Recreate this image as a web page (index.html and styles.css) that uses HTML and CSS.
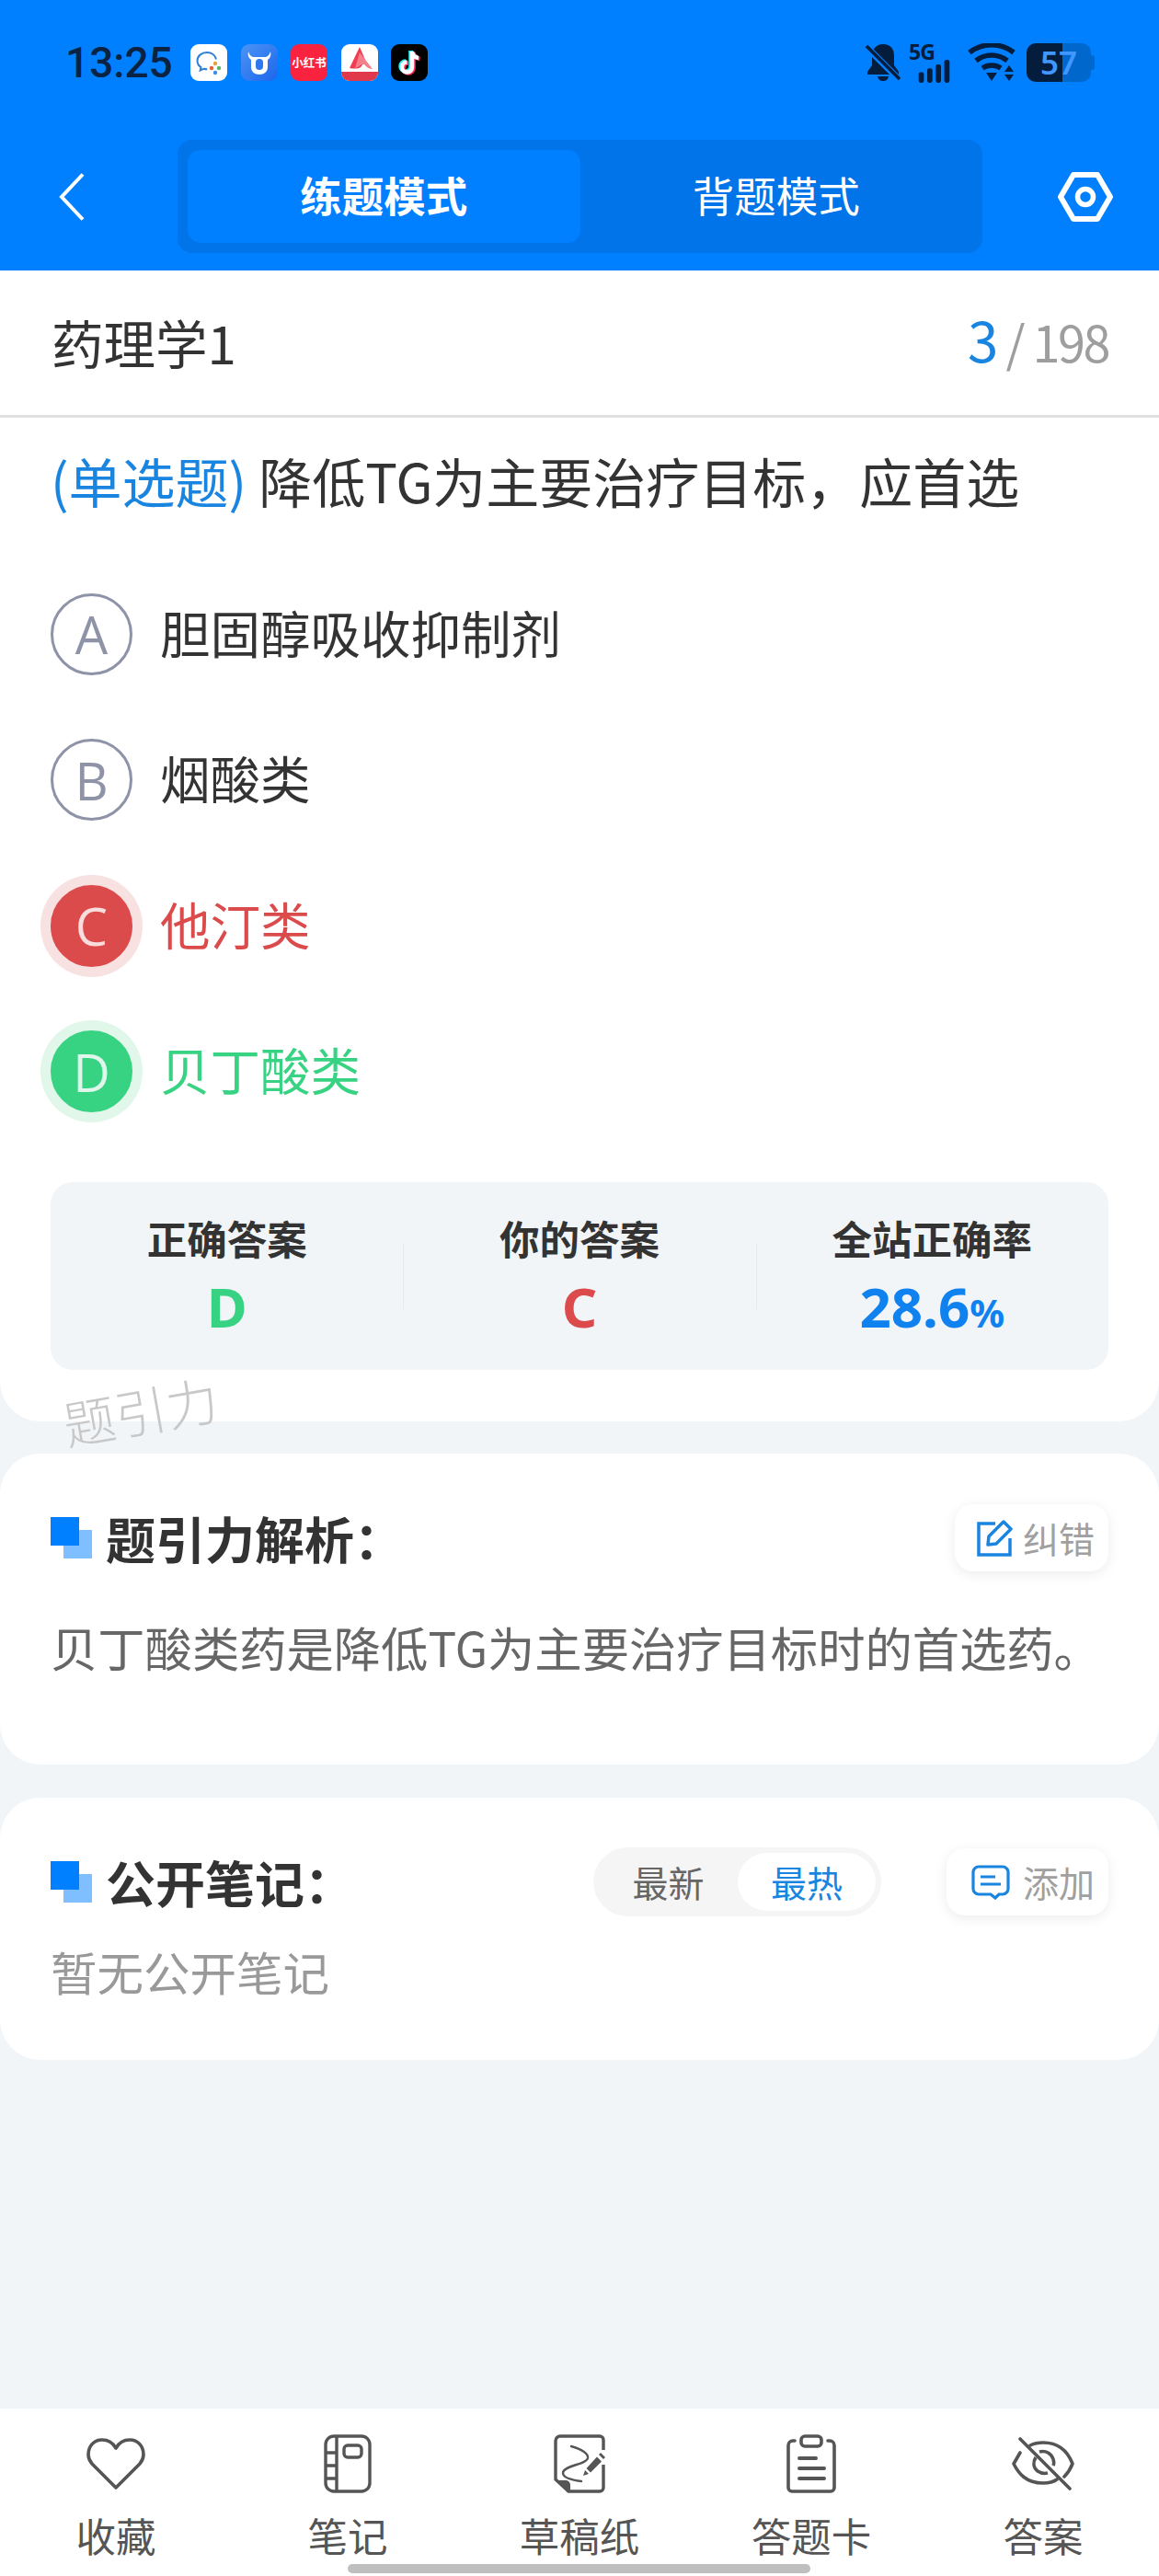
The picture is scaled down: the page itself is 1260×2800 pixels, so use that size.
FILE: index.html
```html
<!DOCTYPE html>
<html lang="zh-CN">
<head>
<meta charset="utf-8">
<title>药理学1</title>
<link rel="stylesheet" href="styles.css">
</head>
<body>
<div class="page">
  <header class="top">
    <div class="status">
      <span class="time">13:25</span>
      <div class="apps">
        <svg class="app" viewBox="0 0 40 40"><rect width="40" height="40" rx="9" fill="#fff"/><path d="M18 9c-6 0-10.500 4-10.500 9 0 3 1.500 5.500 4 7.200l-.8 3.300 4-1.800c1.200.3 2.300.5 3.500.5" fill="none" stroke="#2f7fd6" stroke-width="2"/><path d="M18 9c5 0 9 3 10 7.500" fill="none" stroke="#2f7fd6" stroke-width="2"/><circle cx="27" cy="21" r="2.200" fill="#e8a33a"/><circle cx="23" cy="26" r="2.200" fill="#e8603a"/><circle cx="31" cy="26" r="2.200" fill="#5ab56a"/><circle cx="27" cy="31" r="2.200" fill="#3a8fe8"/></svg>
        <svg class="app" viewBox="0 0 40 40"><defs><linearGradient id="gb" x1="0" y1="0" x2="1" y2="1"><stop offset="0" stop-color="#4b94f5"/><stop offset="1" stop-color="#1d66ec"/></linearGradient></defs><rect width="40" height="40" rx="9" fill="url(#gb)"/><path d="M8 8c1 3 2 5 5 6h14c3-1 4-3 5-6 1 4 0 7-3 9v8c0 5-4 8-9 8s-9-3-9-8v-8c-3-2-4-5-3-9z" fill="#fff"/><rect x="16" y="16" width="8" height="12" rx="4" fill="#2f78ee"/></svg>
        <div class="app app-red">小红书</div>
        <svg class="app" viewBox="0 0 40 40"><rect width="40" height="40" rx="9" fill="#fff"/><path d="M0 30h40v1a9 9 0 0 1-9 9H9a9 9 0 0 1-9-9z" fill="#e0394b"/><path d="M20 3l9 21c-3-3-6-3-7 0-2 3-8 3-13 2z" fill="#ef3e52"/><path d="M20 9l14 18c-5 0-7-3-9-5-3-1-6 3-10 4z" fill="#f5808c"/></svg>
        <svg class="app" viewBox="0 0 40 40"><rect width="40" height="40" rx="9" fill="#000"/><path d="M23 8v17a5.500 5.500 0 1 1-5.500-5.500" fill="none" stroke="#25f4ee" stroke-width="4.500" transform="translate(-1.500 -1)"/><path d="M23 8c.5 4 3 6.500 7 7" fill="none" stroke="#25f4ee" stroke-width="4.500" transform="translate(-1.500 -1)"/><path d="M23 8v17a5.500 5.500 0 1 1-5.500-5.500" fill="none" stroke="#fe2c55" stroke-width="4.500" transform="translate(1.500 1)"/><path d="M23 8c.5 4 3 6.500 7 7" fill="none" stroke="#fe2c55" stroke-width="4.500" transform="translate(1.500 1)"/><path d="M23 8v17a5.500 5.500 0 1 1-5.500-5.500M23 8c.5 4 3 6.500 7 7" fill="none" stroke="#fff" stroke-width="4.500"/></svg>
      </div>
      <div class="sys">
        <svg class="sys-bell" viewBox="0 0 38 42"><path d="M19 1c-8 0-12 6-12 13v10l-5 7v3h34v-3l-5-7V14C31 6 27 1 19 1z" fill="#051d3d"/><path d="M13 36h12c-1 4-3 5-6 5s-5-1-6-5z" fill="#051d3d"/><path d="M1 4l36 36" stroke="#007fff" stroke-width="7"/><path d="M1 3l36 36" stroke="#051d3d" stroke-width="3.500"/></svg>
        <div class="sys-sig">
          <span class="sig-label">5G</span>
          <svg class="sig-bars" viewBox="0 0 47 35"><rect x="0" y="19" width="8" height="16" rx="3" fill="#051d3d"/><rect x="13" y="13" width="8" height="22" rx="3" fill="#051d3d"/><rect x="26" y="7" width="8" height="28" rx="3" fill="#051d3d"/><rect x="39" y="0" width="8" height="35" rx="3" fill="#051d3d"/></svg>
        </div>
        <svg class="sys-wifi" viewBox="0 0 52 42"><path d="M2 10C16-1 36-1 50 10" fill="none" stroke="#051d3d" stroke-width="5.500"/><path d="M9 19c10-8 24-8 34 0" fill="none" stroke="#051d3d" stroke-width="5.500"/><path d="M16 27c6-4 14-4 20 0" fill="none" stroke="#051d3d" stroke-width="5.500"/><path d="M20 32h12l-6 9z" fill="#051d3d"/><path d="M45 24l5 7H40zM40 34h10l-5 7z" fill="#051d3d"/></svg>
        <div class="battery"><div class="batt-fill"></div><span class="batt-num">57</span><i class="batt-nub"></i></div>
      </div>
    </div>
    <nav class="nav">
      <svg class="back" viewBox="0 0 28 52"><path d="M26 1.500L3 26l23 24.500" fill="none" stroke="#fff" stroke-width="4"/></svg>
      <div class="seg">
        <div class="seg-item seg-on">练题模式</div>
        <div class="seg-item">背题模式</div>
      </div>
      <svg class="gear" viewBox="0 0 60 54"><path d="M17 3h26l14 24-14 24H17L3 27z" fill="none" stroke="#fff" stroke-width="6" stroke-linejoin="round"/><circle cx="30" cy="27" r="8.500" fill="none" stroke="#fff" stroke-width="5.500"/></svg>
    </nav>
  </header>

  <main class="main">
    <section class="card card-q">
      <div class="title-row">
        <span class="title">药理学1</span>
        <span class="count"><b class="count-now">3</b><i class="count-slash">/</i><span class="count-all">198</span></span>
      </div>
      <p class="question"><span class="qtype">(单选题)</span> 降低TG为主要治疗目标，应首选</p>
      <ul class="options">
        <li class="option"><span class="ball">A</span><span class="opt-text">胆固醇吸收抑制剂</span></li>
        <li class="option"><span class="ball">B</span><span class="opt-text">烟酸类</span></li>
        <li class="option wrong"><span class="ball">C</span><span class="opt-text">他汀类</span></li>
        <li class="option right"><span class="ball">D</span><span class="opt-text">贝丁酸类</span></li>
      </ul>
      <div class="stats">
        <div class="stat"><span class="stat-label">正确答案</span><span class="stat-val green">D</span></div>
        <div class="stat"><span class="stat-label">你的答案</span><span class="stat-val red">C</span></div>
        <div class="stat"><span class="stat-label">全站正确率</span><span class="stat-val blue">28.6<small>%</small></span></div>
      </div>
      <span class="watermark">题引力</span>
    </section>

    <section class="card card-a">
      <div class="sec-head">
        <i class="mark"></i>
        <h2 class="sec-title">题引力解析：</h2>
        <div class="chip">
          <svg class="chip-icon" viewBox="0 0 40 40"><path d="M20 4H2v34h34V20" fill="none" stroke="#1a85e0" stroke-width="3.500"/><path d="M13 18L29 2l8 8-16 16-9 1z" fill="none" stroke="#1a85e0" stroke-width="3.500" stroke-linejoin="round"/></svg>
          <span>纠错</span>
        </div>
      </div>
      <p class="analysis">贝丁酸类药是降低TG为主要治疗目标时的首选药。</p>
    </section>

    <section class="card card-n">
      <div class="sec-head">
        <i class="mark"></i>
        <h2 class="sec-title">公开笔记：</h2>
        <div class="toggle"><span class="tg-item">最新</span><span class="tg-item tg-on">最热</span></div>
        <div class="chip chip-add">
          <svg class="chip-icon chip-icon-wide" viewBox="0 0 42 38"><path d="M8 2h26a6 6 0 0 1 6 6v18a6 6 0 0 1-6 6h-4l-4 4-5-4H8a6 6 0 0 1-6-6V8a6 6 0 0 1 6-6z" fill="none" stroke="#1a85e0" stroke-width="3.200"/><path d="M10 13h16M10 21h22" stroke="#1a85e0" stroke-width="3.200"/></svg>
          <span>添加</span>
        </div>
      </div>
      <p class="empty">暂无公开笔记</p>
    </section>
  </main>

  <footer class="tabs">
    <div class="tab">
      <span class="tab-ico"><svg width="64" height="56" viewBox="0 0 64 56"><path d="M32 11C28 4 22 2 17 2 8 2 2 9 2 18c0 4 1.500 7 4 10l26 26 26-26c2.500-3 4-6 4-10 0-9-6-16-15-16-5 0-11 2-15 9z" fill="none" stroke="#555" stroke-width="3.600" stroke-linejoin="round"/></svg></span>
      <span class="tab-label">收藏</span>
    </div>
    <div class="tab">
      <span class="tab-ico"><svg width="52" height="64" viewBox="0 0 52 64"><rect x="2" y="2" width="48" height="60" rx="9" fill="none" stroke="#555" stroke-width="3.400"/><path d="M14 2v60M2 20h12M2 34h12M2 48h12" stroke="#555" stroke-width="3.400"/><rect x="22" y="12" width="19" height="13" rx="4" fill="none" stroke="#555" stroke-width="3.400"/></svg></span>
      <span class="tab-label">笔记</span>
    </div>
    <div class="tab">
      <span class="tab-ico"><svg width="56" height="64" viewBox="0 0 56 64"><path d="M54 17V6a4 4 0 0 0-4-4H7a5 5 0 0 0-5 5v42l14 13h34a4 4 0 0 0 4-4V33" fill="none" stroke="#555" stroke-width="3.400"/><path d="M3 50h10a5 5 0 0 1 5 5v7z" fill="#555"/><path d="M19 13c11 3 19 8 18 13-2 7-27 8-27 16 0 6 12 8 20 9" fill="none" stroke="#555" stroke-width="2.400" stroke-linecap="round"/><path d="M32 45l2-6 4 4zM35.500 37L47 24.500l5 5L40 41.500z" fill="#555"/><path d="M49 22l2-2 5 5-2 2z" fill="#555"/></svg></span>
      <span class="tab-label">草稿纸</span>
    </div>
    <div class="tab">
      <span class="tab-ico"><svg width="54" height="64" viewBox="0 0 54 64"><path d="M9 7H7a5 5 0 0 0-5 5v46a4 4 0 0 0 4 4h42a4 4 0 0 0 4-4V12a5 5 0 0 0-5-5h-2" fill="none" stroke="#555" stroke-width="3.600" stroke-linecap="round"/><rect x="16" y="2" width="22" height="11" rx="4" fill="none" stroke="#555" stroke-width="3.600"/><path d="M14 26h18M14 37h27M14 48h27" stroke="#555" stroke-width="4" stroke-linecap="round"/></svg></span>
      <span class="tab-label">答题卡</span>
    </div>
    <div class="tab">
      <span class="tab-ico"><svg width="68" height="58" viewBox="0 0 68 58"><path d="M9 17L2 29c5 10 13 21 32 21 6 0 11-1 15-4M20 9c4-2 9-3 14-3 17 0 27 10 32 23-2 5-5 10-9 14" fill="none" stroke="#555" stroke-width="3.600" stroke-linecap="round" stroke-linejoin="round"/><path d="M26 22c-3 5-3 11 2 15 3 2 7 3 11 2M30 16c7-2 13 2 15 8 1 3 1 5 0 7" fill="none" stroke="#555" stroke-width="3.600"/><path d="M9 2l54 54" stroke="#555" stroke-width="3.600" stroke-linecap="round"/></svg></span>
      <span class="tab-label">答案</span>
    </div>
    <i class="home-bar"></i>
  </footer>
</div>
</body>
</html>
```
FILE: styles.css
```css
* { box-sizing: border-box; margin: 0; padding: 0; }
html, body { width: 1260px; height: 2800px; overflow: hidden; }
body { font-family: "Noto Sans CJK SC", "Noto Sans", sans-serif; background: #f2f5f8; color: #333; }
ul { list-style: none; }
i { font-style: normal; display: block; }
.page { width: 1260px; height: 2800px; display: flex; flex-direction: column; position: relative; }

/* header */
.top { height: 294px; background: #007fff; flex: none; }
.status { height: 152px; display: flex; align-items: flex-start; padding: 47px 74px 0 71px; }
.time { font-family: Roboto, sans-serif; font-weight: 500; font-size: 46px; line-height: 42px; color: #0a2342; width: 136px; flex: none; }
.apps { display: flex; gap: 14.500px; margin-top: 1px; }
.app { width: 40px; height: 40px; display: block; flex: none; }
.app-red { background: #f9233f; border-radius: 9px; color: #fff; font-size: 12.500px; font-weight: 700; line-height: 40px; text-align: center; white-space: nowrap; overflow: hidden; }
.sys { margin-left: auto; display: flex; align-items: flex-start; }
.sys-bell { width: 38px; height: 42px; display: block; }
.sys-sig { width: 47px; height: 42px; margin-left: 13px; position: relative; }
.sig-label { position: absolute; left: -4px; top: 0; font-family: "Noto Sans", sans-serif; font-size: 23px; line-height: 18px; font-weight: 700; color: #051d3d; letter-spacing: -1px; }
.sig-bars { position: absolute; left: 0; bottom: -1px; width: 47px; height: 25px; }
.sys-wifi { width: 52px; height: 42px; margin-left: 13px; display: block; }
.battery { width: 70px; height: 42px; margin-left: 12px; border-radius: 10px; background: #0067cc; position: relative; overflow: visible; }
.batt-fill { width: 39px; height: 42px; background: #051d3d; border-radius: 10px 0 0 10px; }
.batt-num { position: absolute; left: 15px; top: 0; font-family: "Noto Sans", sans-serif; font-size: 35px; line-height: 42px; font-weight: 600; color: #3f97ff; }
.batt-nub { position: absolute; right: -4px; top: 13px; width: 4px; height: 16px; background: #0067cc; border-radius: 0 3px 3px 0; }

.nav { height: 123px; display: flex; align-items: center; padding: 0 50px 0 64px; }
.back { width: 28px; height: 52px; flex: none; display: block; }
.seg { width: 875px; height: 123px; margin-left: 101px; background: #0074e8; border-radius: 16px; display: flex; padding: 11px; }
.seg-item { flex: 1; border-radius: 14px; color: #fff; font-size: 45.500px; display: flex; align-items: center; justify-content: center; line-height: 1; padding-bottom: 4px; }
.seg-on { background: #007fff; font-weight: 700; }
.gear { width: 60px; height: 54px; margin-left: 82px; flex: none; display: block; }

/* content */
.main { flex: 1; min-height: 0; }
.card { background: #fff; border-radius: 44px; position: relative; }
.card-q { height: 1251px; border-radius: 0 0 44px 44px; padding: 0 55px; }
.title-row { height: 160px; margin: 0 -55px; padding: 0 55px 3px 56px; border-bottom: 3px solid #e0e0e0; display: flex; align-items: center; justify-content: space-between; }
.title { font-size: 56.500px; line-height: 1; color: #333; }
.count { display: flex; align-items: baseline; line-height: 1; margin-bottom: 6px; }
.count-now { font-weight: 400; font-size: 60px; color: #1a85e0; }
.count-slash { font-size: 54px; color: #9e9e9e; margin-left: 8px; }
.count-all { font-size: 54px; color: #9e9e9e; margin-left: 8px; letter-spacing: -2.500px; }
.question { font-size: 58px; line-height: 80px; height: 80px; margin-top: 28px; color: #333; white-space: nowrap; }
.qtype { color: #1a85e0; }
.options { margin-top: 48px; }
.option { height: 158.500px; display: flex; align-items: center; }
.ball { width: 89px; height: 89px; border-radius: 50%; border: 3px solid #8e93a8; color: #8e93a8; font-family: "Open Sans", sans-serif; font-size: 56px; line-height: 1; display: flex; align-items: center; justify-content: center; flex: none; }
.opt-text { font-size: 54.500px; line-height: 1; margin-left: 30px; margin-bottom: 5px; color: #333; }
.wrong .ball { background: #db4b4b; border-color: #db4b4b; color: #f9dcdc; box-shadow: 0 0 0 11px #f8e1e1; }
.wrong .opt-text { color: #db4b4b; }
.right .ball { background: #38d283; border-color: #38d283; color: #def7ea; box-shadow: 0 0 0 11px #e0f7ea; }
.right .opt-text { color: #38d283; }
.stats { margin-top: 41px; height: 204px; background: #f2f5f8; border-radius: 24px; display: grid; grid-template-columns: repeat(3, 1fr); }
.stat { display: flex; flex-direction: column; align-items: center; padding-top: 29px; position: relative; }
.stat + .stat::before { content: ""; position: absolute; left: 0; top: 66px; height: 72px; width: 1px; background: #e6e9ee; }
.stat-label { font-size: 43.500px; font-weight: 700; line-height: 64px; color: #333; }
.stat-val { font-size: 60px; font-weight: 700; line-height: 70px; margin-top: 7px; font-family: "Noto Sans", sans-serif; }
.stat-val small { font-size: 42px; }
.green { color: #38d283; }
.red { color: #db4b4b; }
.blue { color: #0f82f0; }
.watermark { position: absolute; left: 75px; top: 1217px; font-size: 56.500px; line-height: 70px; font-weight: 300; color: #c8c8c8; transform: rotate(-10deg); transform-origin: left bottom; white-space: nowrap; }

.card-a { margin-top: 35px; height: 338px; padding: 55px 55px 0; }
.card-n { margin-top: 36px; height: 285px; padding: 55px 55px 0; }
.sec-head { height: 73px; display: flex; align-items: center; position: relative; }
.mark { width: 45px; height: 45px; flex: none; position: relative; }
.mark::before { content: ""; position: absolute; right: 0; bottom: 0; width: 31px; height: 31px; background: #80bfff; }
.mark::after { content: ""; position: absolute; left: 0; top: 0; width: 31px; height: 31px; background: #007fff; }
.sec-title { font-size: 54px; font-weight: 700; line-height: 1; color: #333; margin-left: 15px; white-space: nowrap; }
.chip { margin-left: auto; height: 73px; width: 167px; border-radius: 20px; background: #fff; box-shadow: 0 3px 14px rgba(0, 0, 0, .08); display: flex; align-items: center; padding-left: 24px; font-size: 39px; color: #a0a0a0; flex: none; }
.chip span { margin-left: 10px; line-height: 1; }
.chip-icon { width: 40px; height: 40px; display: block; flex: none; }
.chip-add { width: 176px; padding-left: 27px; margin-left: 71px; }
.chip-add span { margin-left: 14px; }
.chip-icon-wide { width: 42px; height: 38px; }
.analysis { font-size: 51.300px; line-height: 70px; color: #666; margin-top: 47px; white-space: nowrap; }
.empty { font-size: 50.500px; line-height: 70px; color: #999; margin-top: 25px; }
.toggle { margin-left: auto; width: 313px; height: 75px; border-radius: 38px; background: #f5f5f5; padding: 6px; display: flex; font-size: 39px; color: #666; flex: none; }
.tg-item { flex: 1; display: flex; align-items: center; justify-content: center; border-radius: 32px; line-height: 1; }
.tg-on { background: #fff; color: #1a85e0; flex: none; width: 150px; }

/* bottom bar */
.tabs { height: 182px; flex: none; background: #fff; display: grid; grid-template-columns: repeat(5, 252px); position: relative; }
.tab { display: flex; flex-direction: column; align-items: center; }
.tab-ico { height: 64px; margin-top: 28px; display: flex; align-items: center; justify-content: center; }
.tab-ico svg { display: block; }
.tab-label { font-size: 43.500px; line-height: 60px; color: #555; margin-top: 16px; white-space: nowrap; }
.home-bar { position: absolute; left: 378px; top: 169px; width: 503px; height: 10px; border-radius: 5px; background: #bfbfbf; }
```
